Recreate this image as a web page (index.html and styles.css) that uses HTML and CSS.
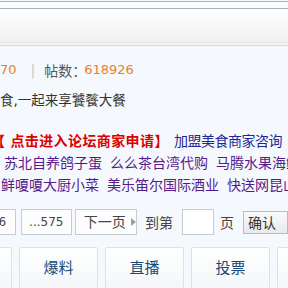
FILE: index.html
```html
<!DOCTYPE html>
<html>
<head>
    <link rel="stylesheet" href="styles.css">
</head>
<body>
    <div class="topbar"></div>
    <div class="header"></div>
    <div class="header-line"></div>
    <div class="content">
        <div class="stats">
            <span class="num">70</span>
            <span class="sep">|</span>
            <span class="label">帖数：</span>
            <span class="num">618926</span>
        </div>
        <div class="intro">食,一起来享饕餮大餐</div>
        <div class="notice">
            <a class="apply" href="#"><span class="bracket">【</span>点击进入论坛商家申请】</a>
            <a class="join" href="#">加盟美食商家咨询</a>
        </div>
        <div class="shops first">
            <a href="#">苏北自养鸽子蛋</a>
            <a href="#">么么茶台湾代购</a>
            <a href="#">马腾水果海鲜</a>
        </div>
        <div class="shops second">
            <a href="#">鲜嗄嗄大厨小菜</a>
            <a href="#">美乐笛尔国际酒业</a>
            <a href="#">快送网昆山站</a>
        </div>
        <div class="pager">
            <a class="page page-6" href="#">6</a>
            <a class="page page-last" href="#">...575</a>
            <a class="page page-next" href="#">下一页<span class="arrow"></span></a>
            <span class="goto">到第</span>
            <input type="text" class="page-input">
            <span class="goto-end">页</span>
            <button type="button" class="confirm">确认</button>
        </div>
        <div class="tabs">
            <a class="tab" href="#">发帖</a>
            <a class="tab" href="#">爆料</a>
            <a class="tab" href="#">直播</a>
            <a class="tab" href="#">投票</a>
            <a class="tab" href="#">活动</a>
        </div>
    </div>
</body>
</html>
```

FILE: styles.css
```css
body {
    margin: 0;
    background: #f5f9fd;
    font-family: "DejaVu Sans", "Noto Sans CJK SC", sans-serif;
    font-size: 14px;
    color: #333;
    overflow: hidden;
    white-space: nowrap;
}
a {
    text-decoration: none;
}
.topbar {
    margin-top: 1px;
    height: 6px;
    background: #fbfcfd;
    border-top: 1px solid #a9b1b9;
    border-bottom: 1px solid #a9b1b9;
}
.header {
    height: 33px;
    background: linear-gradient(#ffffff, #f1f1f1);
    border-bottom: 1px solid #e3e3e3;
}
.header-line {
    height: 2px;
    background: #f4f4f4;
    border-bottom: 1px solid #dadada;
}
.content {
    padding-top: 14px;
}
.stats {
    height: 20px;
    line-height: 20px;
    display: flex;
    align-items: center;
}
.stats .num {
    color: #e5822f;
    font-size: 13px;
}
.stats .sep {
    color: #c8c8c8;
    margin: 0 9px 0 14px;
}
.stats .label {
    color: #555;
    font-family: "Noto Sans CJK SC", sans-serif;
    margin-right: -2px;
}
.intro {
    margin-top: 10px;
    height: 20px;
    line-height: 20px;
    color: #333;
    font-size: 13.5px;
}
.notice {
    margin-top: 19px;
    height: 22px;
    line-height: 22px;
    font-family: "Noto Sans CJK SC", sans-serif;
}
.notice .apply {
    color: #e00000;
    font-weight: bold;
    letter-spacing: 0.4px;
}
.notice .bracket {
    margin-left: -9px;
    margin-right: 5px;
}
.notice .join {
    color: #1a2796;
    margin-left: 2px;
    letter-spacing: -0.5px;
}
.shops {
    height: 22px;
    line-height: 22px;
    font-family: "Noto Sans CJK SC", sans-serif;
    display: flex;
    gap: 8px;
}
.shops a {
    color: #551a8b;
}
.shops.first {
    padding-left: 4px;
}
.shops.second {
    padding-left: 1px;
}
.pager {
    margin-top: 14px;
    margin-left: -11px;
    height: 26px;
    display: flex;
    align-items: center;
    font-family: "DejaVu Sans", "Noto Sans CJK SC", sans-serif;
}
.page {
    box-sizing: border-box;
    height: 26px;
    line-height: 24px;
    border: 1px solid #c5ccd3;
    background: #fdfdfd;
    color: #444;
    font-size: 12px;
    text-align: center;
}
.page-6 {
    width: 30px;
    margin-right: 5px;
}
.page-last {
    width: 57px;
    margin-right: 3px;
}
.page-next {
    width: 69px;
    font-size: 14px;
    text-align: left;
    padding-left: 8px;
    display: flex;
    align-items: center;
}
.arrow {
    width: 0;
    height: 0;
    margin-left: 5px;
    border-left: 5px solid #a0a0a0;
    border-top: 4px solid transparent;
    border-bottom: 4px solid transparent;
}
.goto {
    margin-left: 8px;
    color: #444;
}
.page-input {
    box-sizing: border-box;
    width: 32px;
    height: 26px;
    margin: 0 6px 0 9px;
    border: 1px solid #c5ccd3;
    background: #fff;
    padding: 0;
}
.goto-end {
    color: #444;
}
.confirm {
    box-sizing: border-box;
    height: 23px;
    width: 50px;
    margin-left: 9px;
    padding: 0 0 0 4px;
    text-align: left;
    border: 1px solid #b5bcc4;
    background: linear-gradient(#fafafa, #e9e9e9);
    font-family: "Noto Sans CJK SC", sans-serif;
    font-size: 14px;
    color: #333;
}
.tabs {
    margin-top: 12px;
    margin-left: -67px;
    display: flex;
    gap: 7px;
}
.tab {
    box-sizing: border-box;
    flex: none;
    width: 79px;
    height: 44px;
    padding-top: 6px;
    border: 1px solid #dbe2ea;
    border-radius: 2px;
    background: linear-gradient(#ffffff, #f3f6f9);
    text-align: center;
    font-family: "Noto Sans CJK SC", sans-serif;
    font-size: 15px;
    line-height: 26px;
    color: #1b4a78;
}
```
